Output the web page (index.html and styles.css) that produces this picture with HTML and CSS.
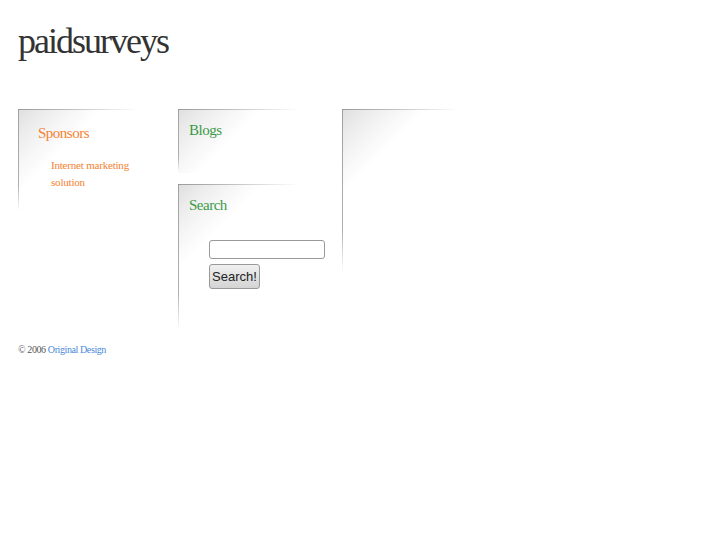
FILE: index.html
```html
<html>
<head>
	<title>paidsurveys</title>
	<link rel="stylesheet" href="styles.css">
</head>
<body>
	<div id="page">
		<h1 id="logo">paidsurveys</h1>

		<div id="columns">
			<div class="column column-left">
				<div class="box box-sponsors">
					<h2 class="orange">Sponsors</h2>
					<ul class="links">
						<li><a href="#">Internet marketing solution</a></li>
					</ul>
				</div>
			</div>

			<div class="column column-mid">
				<div class="box box-blogs">
					<h2>Blogs</h2>
				</div>
				<div class="box box-search">
					<h2>Search</h2>
					<form class="search">
						<input type="text" class="search-field">
						<button type="button" class="search-btn">Search!</button>
					</form>
				</div>
			</div>

			<div class="column column-right">
				<div class="box box-empty"></div>
			</div>
		</div>

		<div id="footer">&copy; 2006 <a href="#">Original Design</a></div>
	</div>
</body>
</html>
```

FILE: styles.css
```css
body {
	margin: 0;
	background-color: #fff;
	font-family: "Liberation Serif", "Times New Roman", serif;
	color: #555;
}

#page {
	padding: 0 18px;
}

#logo {
	margin: 21px 0 47px;
	font-size: 36px;
	font-weight: normal;
	letter-spacing: -2px;
	line-height: 41px;
	color: #333;
}

#columns {
	display: flex;
	align-items: flex-start;
}

.column-left {
	width: 160px;
}

.column-mid {
	width: 164px;
}

.column-right {
	width: 160px;
}

.box {
	background:
		linear-gradient(to right, #9a9a9a, #bbb 40%, #fff) top left / 120px 1px no-repeat,
		linear-gradient(#a0a0a0, #b0b0b0 75%, #fff) top left / 1px 100% no-repeat,
		linear-gradient(135deg, #dedede 0, #ececec 20px, #f6f6f6 40px, #fff 60px) top left / 120px 120px no-repeat;
}

.box h2 {
	margin: 0;
	font-size: 15px;
	font-weight: normal;
	letter-spacing: -0.5px;
	line-height: 17px;
	color: #3a9a48;
}

.box h2.orange {
	color: #f58232;
}

.box-sponsors {
	height: 102px;
	box-sizing: border-box;
	padding: 16px 0 0 20px;
}

.links {
	list-style: none;
	margin: 15px 0 0;
	padding: 0 0 0 13px;
	width: 100px;
	font-size: 11px;
	letter-spacing: -0.2px;
	line-height: 17px;
}

.links a {
	color: #f58232;
	text-decoration: none;
}

.box-blogs {
	height: 64px;
	box-sizing: border-box;
	padding: 13px 0 0 11px;
}

.box-search {
	margin-top: 11px;
	height: 146px;
	box-sizing: border-box;
	padding: 13px 0 0 11px;
}

.search {
	margin: 26px 0 0 20px;
	display: flex;
	flex-direction: column;
	align-items: flex-start;
	gap: 5px;
}

.search-field {
	width: 116px;
	height: 19px;
	box-sizing: border-box;
	border: 1px solid #999;
	border-radius: 3px;
	background: #fff;
	padding: 0 3px;
}

.search-btn {
	width: 51px;
	height: 25px;
	padding: 0;
	font-family: "Liberation Sans", Arial, sans-serif;
	font-size: 13px;
	color: #222;
	border: 1px solid #999;
	border-radius: 3px;
	background: linear-gradient(#f0f0f0, #d4d4d4);
}

.box-empty {
	height: 163px;
	background-size: 116px 1px, 1px 100%, 120px 120px;
}

#footer {
	margin-top: 14px;
	font-size: 10px;
	letter-spacing: -0.4px;
	line-height: 12px;
	color: #555;
}

#footer a {
	color: #4a8ad8;
	text-decoration: none;
}
```
